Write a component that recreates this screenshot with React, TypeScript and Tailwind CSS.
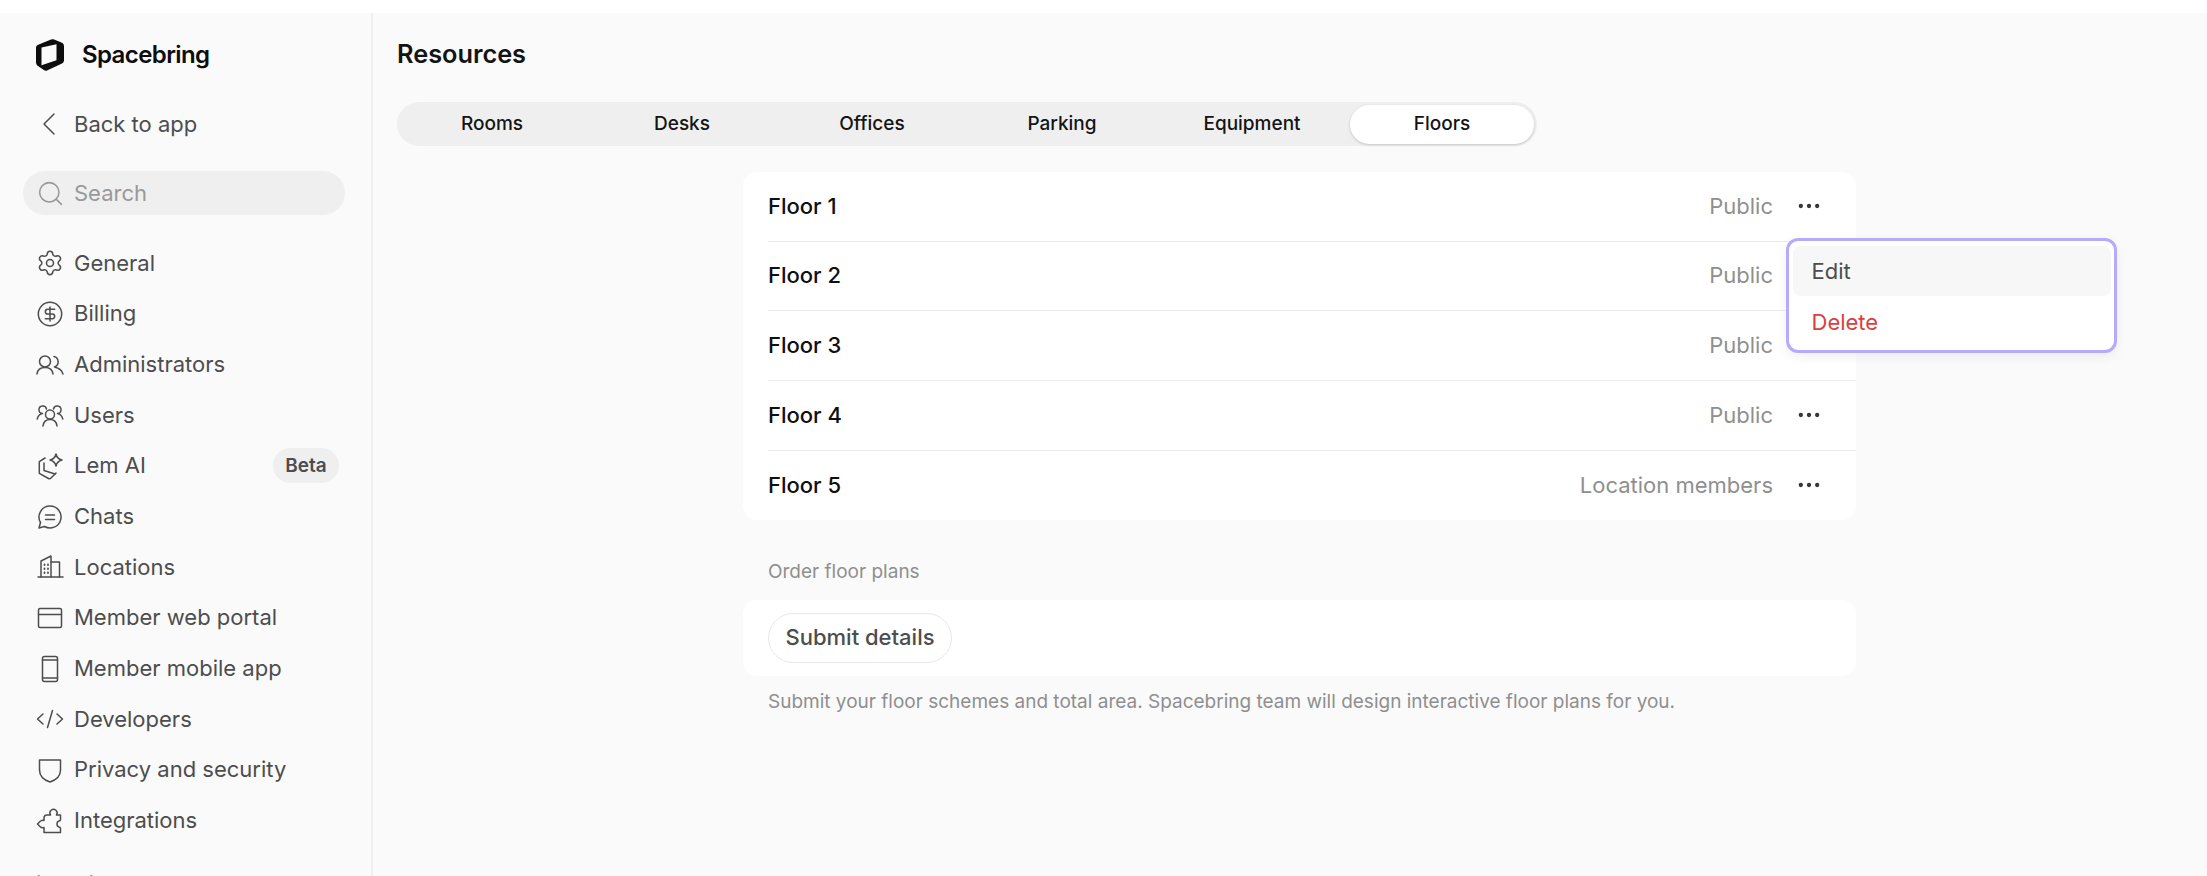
import { Search, Settings, CircleDollarSign, Ellipsis } from "lucide-react"

const font = "font-['Inter',_'Liberation_Sans',_sans-serif]"

function Logo() {
  return (
    <svg viewBox="0 0 28 32" className="w-[28px] h-[32px] shrink-0" fill="#0d0d0d">
      <path
        fillRule="evenodd"
        d="M17.5 0.3 L26 3.8 Q28 4.7 28 7 V21.5 Q28 23.6 26 24.4 L11 31.4 Q9.6 32 8.2 31.2 L1.6 26.8 Q0 25.7 0 23.6 V8.5 Q0 6.8 1.6 6 L15 0.6 Q16.3 0.1 17.5 0.3 Z M20.5 5.2 L5.5 8.4 V26.2 L20.5 21.2 Z"
      />
    </svg>
  )
}

function NavIcon({ children }: { children: React.ReactNode }) {
  return (
    <svg viewBox="0 0 28 28" className="w-[28px] h-[28px] shrink-0" fill="none" stroke="#4d4d4d" strokeWidth="1.5" strokeLinecap="round" strokeLinejoin="round">
      {children}
    </svg>
  )
}

const navItems = [
  { label: "General", icon: <Settings size={28} strokeWidth={1.3} /> },
  { label: "Billing", icon: <CircleDollarSign size={28} strokeWidth={1.3} /> },
  {
    label: "Administrators",
    icon: (
      <NavIcon>
        <circle cx="9" cy="10.5" r="5.5" />
        <path d="M1 23 C1.5 19 4.5 16.5 9 16.5 S16.5 19 17 23" />
        <path d="M18 5.5 A5.5 5.5 0 0 1 18.5 16 C22.5 17 26 19 27 23" />
      </NavIcon>
    ),
  },
  {
    label: "Users",
    icon: (
      <NavIcon>
        <circle cx="14" cy="13.5" r="4.5" />
        <path d="M7 25 C7.5 21 10 18.5 14 18.5 S20.5 21 21 25" />
        <path d="M10.5 8 A3.8 3.8 0 1 0 6.5 12.5 C4 13 2 15 1.2 18" />
        <path d="M17.5 8 A3.8 3.8 0 1 1 21.5 12.5 C24 13 26 15 26.8 18" />
      </NavIcon>
    ),
  },
  {
    label: "Lem AI",
    icon: (
      <NavIcon>
        <path d="M20 2 C20.6 5 22.8 7.2 26 8 C22.8 8.8 20.6 11 20 14 C19.4 11 17.2 8.8 14 8 C17.2 7.2 19.4 5 20 2 Z" />
        <path d="M9 6 L3.3 9.7 V21.3 L12.5 26.5 Q14 27.2 15 26 L20 21" />
        <path d="M8 11 V18.5 L19 22" />
      </NavIcon>
    ),
  },
  {
    label: "Chats",
    icon: (
      <NavIcon>
        <path d="M14 3 A11 11 0 1 1 8.5 23.5 L3 25 L4.5 19.5 A11 11 0 0 1 14 3 Z" />
        <path d="M9.5 12 H18.5 M9.5 16.5 H18.5" />
      </NavIcon>
    ),
  },
  {
    label: "Locations",
    icon: (
      <NavIcon>
        <path d="M2 24 H27" />
        <path d="M5 24 V8 L15 3 V24" />
        <path d="M15 9 H23.5 V24" />
        <path d="M8.5 11.5 V12 M12 11.5 V12 M8.5 15.5 V16 M12 15.5 V16 M8.5 19.5 V20 M12 19.5 V20" strokeWidth="1.8" />
      </NavIcon>
    ),
  },
  {
    label: "Member web portal",
    icon: (
      <NavIcon>
        <rect x="2.5" y="4.5" width="23" height="19" rx="1.5" />
        <path d="M2.5 10.5 H25.5" />
      </NavIcon>
    ),
  },
  {
    label: "Member mobile app",
    icon: (
      <NavIcon>
        <rect x="6.5" y="1.5" width="15" height="25" rx="2" />
        <path d="M6.5 5 H21.5 M6.5 23 H21.5" />
      </NavIcon>
    ),
  },
  {
    label: "Developers",
    icon: (
      <NavIcon>
        <path d="M7 9 L1.5 14 L7 19" />
        <path d="M21 9 L26.5 14 L21 19" />
        <path d="M16.5 5.5 L11.5 22.5" />
      </NavIcon>
    ),
  },
  {
    label: "Privacy and security",
    icon: (
      <NavIcon>
        <path d="M3.5 4 H24.5 V14 C24.5 20 20 24 14 26 C8 24 3.5 20 3.5 14 Z" />
      </NavIcon>
    ),
  },
  {
    label: "Integrations",
    icon: (
      <NavIcon>
        <path d="M11 8 H14.5 A3.6 3.6 0 1 1 20.5 8 H24.5 V12.5 Q24.5 14 23 14 Q21 14.5 21 17 T23 20 Q24.5 20 24.5 21.5 V25.5 H8 V20.5 Q6 21.5 4 19.5 L1.5 17 L4 14.5 Q6 12.5 8 13.5 V11 Q8 8 11 8 Z" />
      </NavIcon>
    ),
  },
]

const tabs = ["Rooms", "Desks", "Offices", "Parking", "Equipment", "Floors"]

const floors = [
  { name: "Floor 1", access: "Public" },
  { name: "Floor 2", access: "Public" },
  { name: "Floor 3", access: "Public" },
  { name: "Floor 4", access: "Public" },
  { name: "Floor 5", access: "Location members" },
]

export default function App() {
  return (
    <div className={`h-[876px] overflow-hidden bg-white pt-[13px] text-[22px] ${font}`}>
      <div className="relative flex h-[863px] bg-[#fafafa]">
        {/* Sidebar */}
        <aside className="w-[373px] shrink-0 overflow-hidden border-r-2 border-[#efefef] pl-[23px] pr-[26px]">
          <div className="flex h-[84px] items-center gap-[18px] pl-[13px] pb-[1px]">
            <Logo />
            <span className="text-[24px] font-semibold tracking-[-0.6px] text-[#0d0d0d]">Spacebring</span>
          </div>
          <div className="flex h-[54px] items-center gap-[10px] pl-[13px] text-[#4d4d4d]">
            <NavIcon>
              <path d="M18 4 L8 14 L18 24" />
            </NavIcon>
            <span>Back to app</span>
          </div>
          <div className="mt-[20px] flex h-[44px] items-center gap-[9px] rounded-full bg-[#efefef] pl-[13px] text-[#999999]">
            <Search size={29} strokeWidth={1.3} />
            <span>Search</span>
          </div>
          <nav className="mt-[23px] flex flex-col">
            {navItems.map((item) => (
              <div key={item.label} className="flex h-[50.67px] items-center gap-[10px] pl-[13px] text-[#4d4d4d]">
                {item.icon}
                <span>{item.label}</span>
                {item.label === "Lem AI" && (
                  <span className="ml-auto mr-[6px] flex h-[35px] w-[66px] items-center justify-center rounded-full bg-[#efefef] text-[19px] font-semibold text-[#4d4d4d]">
                    Beta
                  </span>
                )}
              </div>
            ))}
            <div className="mt-[24px] pl-[13px] text-[20px] leading-[26px] text-[#8f8f8f]">Locations</div>
          </nav>
        </aside>

        {/* Main */}
        <main className="flex-1 pl-[24px]">
          <h1 className="flex h-[82px] items-center text-[25.3px] font-semibold text-[#141414]">Resources</h1>
          <div className="mt-[7px] flex h-[44px] w-[1140px] items-center rounded-full bg-[#efefef]">
            {tabs.map((tab) => (
              <div key={tab} className="flex h-[44px] w-[190px] items-center justify-center text-[19px] font-medium text-[#141414]">
                {tab === "Floors" ? (
                  <div className="flex h-[39px] w-[184px] items-center justify-center rounded-full bg-white shadow-[0_1px_3px_rgba(0,0,0,0.18)]">
                    {tab}
                  </div>
                ) : (
                  tab
                )}
              </div>
            ))}
          </div>

          <div className="ml-[346px] w-[1113px]">
            <div className="mt-[26px] rounded-[14px] bg-white pl-[25px]">
              {floors.map((floor, i) => (
                <div key={floor.name} className={`flex items-center pr-[33px] ${i > 0 ? "h-[69.8px] border-t border-[#ececec]" : "h-[68.5px]"}`}>
                  <span className="font-medium text-[#0f0f0f]">{floor.name}</span>
                  <span className="ml-auto text-[#8f8f8f]">{floor.access}</span>
                  <Ellipsis size={28} strokeWidth={1.7} className="ml-[22px] text-[#333333]" />
                </div>
              ))}
            </div>

            <div className="mt-[39px] pl-[25px] text-[19px] leading-[26px] text-[#8f8f8f]">Order floor plans</div>
            <div className="mt-[15px] flex h-[76px] items-center rounded-[14px] bg-white pl-[25px]">
              <button className="flex h-[50px] items-center rounded-full border border-[#e8e8e8] px-[16.5px] pb-[1px] font-medium text-[#4d4d4d]">
                Submit details
              </button>
            </div>
            <p className="mt-[13px] pl-[25px] text-[19px] leading-[26px] text-[#8f8f8f]">
              Submit your floor schemes and total area. Spacebring team will design interactive floor plans for you.
            </p>
          </div>
        </main>

        {/* Row menu */}
        <div className="absolute left-[1786px] top-[225px] w-[331px] rounded-[12px] border-[3.5px] border-[#b5aafc] bg-white px-[3.5px] py-[4.5px] shadow-[0_4px_12px_rgba(0,0,0,0.06)]">
          <div className="flex h-[50px] items-center rounded-[8px] bg-[#f7f7f7] pl-[19px] pt-[1px] text-[#4d4d4d]">Edit</div>
          <div className="flex h-[50px] items-center pl-[19px] pt-[3px] text-[#d93f3f]">Delete</div>
        </div>
      </div>
    </div>
  )
}
